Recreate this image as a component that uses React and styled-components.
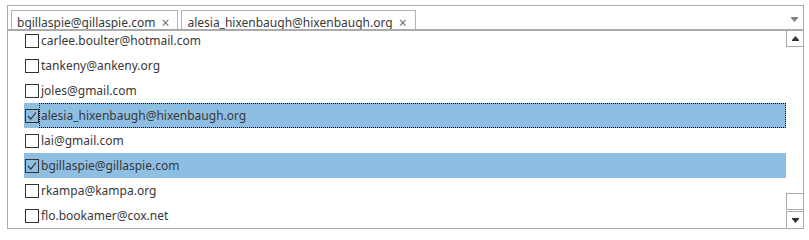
import React from "react";
import styled, { createGlobalStyle } from "styled-components";

const Global = createGlobalStyle`
  html, body { margin: 0; padding: 0; background: #fff; }
  body { padding: 5px 0 0 7px; }
`;

const Widget = styled.div`
  width: 797px;
  display: flex;
  flex-direction: column;
  font-family: "Noto Sans", "Open Sans", sans-serif;
  font-size: 12px;
  color: #383838;
`;

const Combo = styled.div`
  border: 1px solid #ababab;
  border-bottom: none;
  display: flex;
  align-items: flex-start;
  padding: 4px 0 0 3px;
  box-sizing: border-box;
  height: 24px;
  overflow: hidden;
`;

const Tags = styled.div`
  display: flex;
  gap: 3px;
  flex: 1;
`;

const Tag = styled.div`
  display: flex;
  align-items: flex-start;
  height: 26px;
  box-sizing: border-box;
  border: 1px solid #b4b4b4;
  padding: 3px 8px 0 5px;
  line-height: 18px;
  white-space: nowrap;
`;

const Remove = styled.span`
  margin-left: 6px;
  color: #707070;
  font-size: 14px;
  line-height: 17px;
`;

const ComboArrow = styled.div`
  width: 17px;
  height: 19px;
  display: flex;
  align-items: center;
  justify-content: center;
  padding-left: 4px;
`;

const Dropdown = styled.div`
  height: 200px;
  box-sizing: border-box;
  border: 1px solid #ababab;
  border-top: 2px solid #ababab;
  display: flex;
`;

const ListArea = styled.div`
  flex: 1;
  overflow: hidden;
`;

const List = styled.ul`
  list-style: none;
  margin: -3px 0 0 0;
  padding: 0 0 0 16px;
`;

const Row = styled.li`
  height: 25px;
  display: flex;
  align-items: center;
  background: ${(p) => (p.$selected ? "#8ebee2" : "transparent")};
`;

const Box = styled.span`
  width: 14px;
  height: 14px;
  box-sizing: border-box;
  border: 1px solid #333;
  margin-left: 1px;
  display: flex;
  align-items: center;
  justify-content: center;
  flex: none;
`;

const Label = styled.span`
  flex: 1;
  height: 25px;
  box-sizing: border-box;
  padding-left: 1px;
  line-height: 23px;
  border: 1px dotted ${(p) => (p.$focused ? "#000" : "transparent")};
  white-space: nowrap;
`;

const Scrollbar = styled.div`
  width: 17px;
  display: flex;
  flex-direction: column;
`;

const UpButton = styled.div`
  height: 16px;
  box-sizing: border-box;
  border-left: 1px solid #ababab;
  border-bottom: 1px solid #ababab;
  display: flex;
  align-items: center;
  justify-content: center;
`;

const Track = styled.div`
  flex: 1;
  display: flex;
  flex-direction: column;
  justify-content: flex-end;
  padding-bottom: 1px;
`;

const Thumb = styled.div`
  height: 17px;
  box-sizing: border-box;
  border: 1px solid #ababab;
  border-right: none;
`;

const DownButton = styled.div`
  height: 17px;
  box-sizing: border-box;
  border-left: 1px solid #ababab;
  border-top: 1px solid #ababab;
  display: flex;
  align-items: center;
  justify-content: center;
`;

const TriDown = ({ color }) => (
  <svg width="7" height="5" viewBox="0 0 7 5">
    <polygon points="0,0 7,0 7,1 3.5,5 0,1" fill={color} />
  </svg>
);

const TriUp = ({ color }) => (
  <svg width="7" height="5" viewBox="0 0 7 5">
    <polygon points="3.5,0 7,4 7,5 0,5 0,4" fill={color} />
  </svg>
);

const Check = () => (
  <svg width="12" height="12" viewBox="0 0 12 12">
    <polyline points="2,6 4.8,9 10,2.5" fill="none" stroke="#333" strokeWidth="1.2" />
  </svg>
);

const items = [
  { email: "carlee.boulter@hotmail.com" },
  { email: "tankeny@ankeny.org" },
  { email: "joles@gmail.com" },
  { email: "alesia_hixenbaugh@hixenbaugh.org", checked: true, focused: true },
  { email: "lai@gmail.com" },
  { email: "bgillaspie@gillaspie.com", checked: true },
  { email: "rkampa@kampa.org" },
  { email: "flo.bookamer@cox.net" },
];

export default function App() {
  return (
    <>
      <Global />
      <Widget>
        <Combo>
          <Tags>
            <Tag>
              bgillaspie@gillaspie.com<Remove>×</Remove>
            </Tag>
            <Tag>
              alesia_hixenbaugh@hixenbaugh.org<Remove>×</Remove>
            </Tag>
          </Tags>
          <ComboArrow>
            <TriDown color="#808080" />
          </ComboArrow>
        </Combo>
        <Dropdown>
          <ListArea>
            <List>
              {items.map((it) => (
                <Row key={it.email} $selected={it.checked}>
                  <Box>{it.checked && <Check />}</Box>
                  <Label $focused={it.focused}>{it.email}</Label>
                </Row>
              ))}
            </List>
          </ListArea>
          <Scrollbar>
            <UpButton>
              <TriUp color="#333" />
            </UpButton>
            <Track>
              <Thumb />
            </Track>
            <DownButton>
              <TriDown color="#333" />
            </DownButton>
          </Scrollbar>
        </Dropdown>
      </Widget>
    </>
  );
}
